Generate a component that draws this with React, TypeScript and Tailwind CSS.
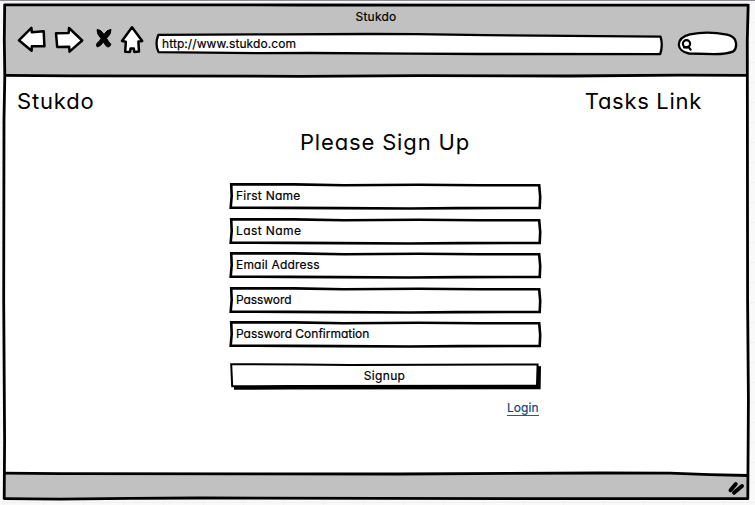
import React from "react";

const FONT = "font-[Inter,'Liberation_Sans',sans-serif] [font-feature-settings:'cv11','calt'_0]";
const SMALL = "text-[12px] font-normal [-webkit-text-stroke:0.2px]";

function BackIcon() {
  return (
    <svg className="ml-[13px] block h-[30px] w-[30px]" viewBox="17 25 30 30" fill="#fff" stroke="#000" strokeWidth="2.5" strokeLinejoin="round">
      <path d="M18.9 40.3 L31.4 27.9 L31.8 32.3 L43.7 31.3 L44.4 46.3 L31.8 46.3 L31.6 50.8 Z" />
    </svg>
  );
}

function ForwardIcon() {
  return (
    <svg className="ml-[7px] block h-[30px] w-[30px]" viewBox="54 25 30 30" fill="#fff" stroke="#000" strokeWidth="2.5" strokeLinejoin="round">
      <path d="M56 33.2 L68.7 33 L69 28 L82.2 40.5 L69.5 51.6 L69.2 46.8 L57.2 47 Z" />
    </svg>
  );
}

function StopIcon() {
  return (
    <svg className="ml-[10px] block h-[30px] w-[20px]" viewBox="94 25 20 30" fill="#000" stroke="#000" strokeWidth="1" strokeLinejoin="round">
      <path d="M97 29.6 Q101 29.2 104 34.6 Q106.5 29.6 111 29.4 Q111.6 33.5 106.6 38.4 Q108.6 42 110.9 44.2 Q110 47.6 107.4 47 Q105 45 103.3 42 Q100.4 46.6 97.2 47 Q95.8 44.6 97.2 43 Q99.8 41.4 101 38.4 Q96.4 33.6 97 29.6 Z" />
    </svg>
  );
}

function HomeIcon() {
  return (
    <svg className="ml-[5px] block h-[30px] w-[26px]" viewBox="119 25 26 30" fill="#fff" stroke="#000" strokeWidth="2.5" strokeLinejoin="round">
      <path d="M132 27.3 L142.2 41 L138.4 41.6 L139 51.6 L134.3 51.9 L133.8 48.4 L130.6 48.4 L130 51.9 L125.2 51.8 L125.8 41.8 L122 41 Z" />
    </svg>
  );
}

function AddressBar() {
  return (
    <div className="relative mt-[6px] ml-[9px] h-[26px] w-[512px]">
      <svg className="absolute inset-0" width="512" height="26" viewBox="154 31 512 26" fill="#fff" stroke="#000" strokeWidth="2.3" strokeLinejoin="round">
        <path d="M158.4 34.8 L280 34.3 L370 34 L416 34.2 L485 35.2 L660.5 36.6 Q663.2 45 660.2 54.1 L480 54 L410 53.6 L310 53 L260 53.2 L158.5 52.1 Q154.6 44 158.4 34.8 Z" />
      </svg>
      <span className={`relative block pl-[8px] leading-[25px] tracking-[0.08px] ${SMALL}`}>http://www.stukdo.com</span>
    </div>
  );
}

function SearchBox() {
  return (
    <svg className="mt-[5px] ml-[11px] block h-[28px] w-[62px]" viewBox="677 30 62 28" fill="#fff" stroke="#000" strokeWidth="2.3" strokeLinejoin="round">
      <path d="M690 34.4 Q707 30.8 727 34.6 Q735 36.5 735.8 42 Q737 48.5 733.3 51.4 Q728 54 714 54.2 L689 53.5 Q679.5 51.5 678.8 45 Q679 37 690 34.4 Z" />
      <circle cx="686.5" cy="43.8" r="3.6" strokeWidth="2.2" />
      <path d="M688.2 46.6 L690.6 49.6 M684 47.4 L688.5 47.5" strokeWidth="2.2" strokeLinecap="round" />
    </svg>
  );
}

function Field({ label, spacing }: { label: string; spacing: string }) {
  return (
    <div className="relative h-[27px] w-[313px]">
      <svg className="absolute inset-0" width="313" height="27" viewBox="0 0 313 27" fill="#fff" stroke="#000" strokeWidth="2.6">
        <path d="M2.2 1.4 L65 1.4 L115 2.2 L190 1.7 L250 2.3 L310.2 2.3 L311.2 14 L310.7 25 L230 25.1 L180 25.5 L110 25.1 L60 24.9 L1.7 24.6 L2.7 13 Z" />
      </svg>
      <span className={`relative block pl-[7px] leading-[25px] ${SMALL} ${spacing}`}>{label}</span>
    </div>
  );
}

function SignupButton() {
  return (
    <button className="relative block h-[28px] w-[313px]">
      <svg className="absolute inset-0" width="313" height="28" viewBox="229 362 313 28">
        <path d="M234 386 L538 366 L541 366.2 L540.6 389.2 L290 389.6 L234 389.8 Z" fill="#000" />
        <path d="M231.2 364.3 L300 364.5 L350 365.1 L537.6 364.4 L537 385.6 L290 385.9 L232.2 386.3 Z" fill="#fff" stroke="#000" strokeWidth="2" />
      </svg>
      <span className={`relative -mt-px block pr-[2px] text-center leading-[26px] tracking-[0.35px] ${SMALL}`}>Signup</span>
    </button>
  );
}

function WindowOutline() {
  return (
    <svg className="pointer-events-none absolute inset-0" width="755" height="505" viewBox="0 0 755 505" fill="none" stroke="#000" strokeWidth="2.8">
      <path d="M4 4.8 L300 5 L748.6 5.1" />
      <path d="M4.7 4 L4.3 40 L4.8 76 L4 120 L3.7 300 L4.6 440 L4.2 499.2" />
      <path d="M748.2 4 L747.3 40 L747.6 300 L748.4 400 L747.8 499.6" />
      <path d="M4 75.4 L70 75.8 L300 76.3 L420 75.7 L570 76 L680 75.2 L748 75.3" />
      <path d="M4 473.1 L60 473.6 L400 474 L600 473 L670 473.2 L710 474.6 L748 475.5" />
      <path d="M3.6 498.6 L60 499.1 L130 498.3 L200 498 L520 498.6 L748.5 498.7" />
      <path d="M730.5 490.3 L735.8 484 M734 492.8 L742 486" strokeWidth="4" strokeLinecap="round" />
    </svg>
  );
}

export default function App() {
  return (
    <div
      className={`relative h-[505px] w-[755px] overflow-hidden border-t border-[#8b8b93] bg-[#f9f9fa] bg-[linear-gradient(#f1f1f1_1px,transparent_1px),linear-gradient(90deg,#f1f1f1_1px,transparent_1px)] bg-[size:20px_20px,40px_40px] bg-[position:0_1px,3px_0] pt-[4px] pl-[4px] text-black ${FONT}`}
    >
      <div className="flex h-[494px] w-[744px] flex-col bg-white">
        <header className="h-[71px] bg-[#c1c1c1]">
          <h1 className={`h-[20px] text-center leading-[23px] tracking-[0.25px] ${SMALL}`}>Stukdo</h1>
          <div className="flex">
            <BackIcon />
            <ForwardIcon />
            <StopIcon />
            <HomeIcon />
            <AddressBar />
            <SearchBox />
          </div>
        </header>
        <nav className="flex h-[46px] justify-between pr-[46px] pl-[13px] text-[22px] leading-[50px] font-normal">
          <a className="tracking-[0.85px]">Stukdo</a>
          <a className="tracking-[0.7px]">Tasks Link</a>
        </nav>
        <main className="flex w-full grow flex-col pl-[225px]">
          <h2 className="h-[61px] w-[312px] text-center text-[22px] leading-[40px] font-normal tracking-[0.85px]">Please Sign Up</h2>
          <form className="flex flex-col">
            <div className="flex flex-col gap-[7.5px]">
              <Field label="First Name" spacing="tracking-[0.25px]" />
              <Field label="Last Name" spacing="tracking-[0.42px]" />
              <Field label="Email Address" spacing="tracking-[0.2px]" />
              <Field label="Password" spacing="tracking-[-0.08px]" />
              <Field label="Password Confirmation" spacing="tracking-[-0.01px]" />
            </div>
            <div className="pt-[14px]">
              <SignupButton />
            </div>
            <a className={`mt-[10px] ml-[278px] w-fit border-b border-[#31548a] leading-[15px] text-[#163f7d] tracking-[0.05px] ${SMALL}`}>Login</a>
          </form>
        </main>
        <footer className="h-[25px] shrink-0 bg-[#c1c1c1]" />
      </div>
      <div className="absolute -top-px left-0">
        <WindowOutline />
      </div>
    </div>
  );
}
